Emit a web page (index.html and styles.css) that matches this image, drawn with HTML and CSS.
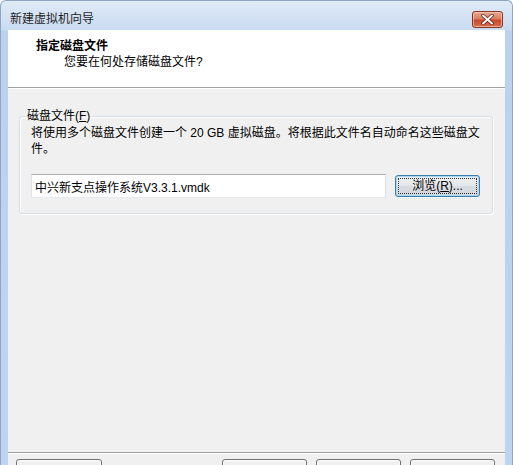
FILE: index.html
```html
<!DOCTYPE html>
<html lang="zh-CN">
<head>
    <meta charset="UTF-8">
    <title>新建虚拟机向导</title>
    <link rel="stylesheet" href="styles.css">
</head>
<body>

<div class="window">

    <!-- Title Bar -->
    <div class="titlebar">
        <span class="title">新建虚拟机向导</span>
        <button class="close" title="关闭">
            <svg width="13" height="11" viewBox="0 0 13 11">
                <path d="M2 1.5 L11 9.5 M11 1.5 L2 9.5" stroke="#5a1a10" stroke-width="3.4" stroke-linecap="round"/>
                <path d="M2 1.5 L11 9.5 M11 1.5 L2 9.5" stroke="#ffffff" stroke-width="2" stroke-linecap="round"/>
            </svg>
        </button>
    </div>

    <div class="client">

        <!-- Header -->
        <div class="header">
            <h1>指定磁盘文件</h1>
            <p>您要在何处存储磁盘文件?</p>
        </div>

        <!-- Content -->
        <div class="content">
            <fieldset class="group">
                <legend>磁盘文件(<u>F</u>)</legend>
                <p class="desc">将使用多个磁盘文件创建一个 20 GB 虚拟磁盘。将根据此文件名自动命名这些磁盘文<br>件。</p>
                <div class="file-row">
                    <input class="file-input" type="text" value="中兴新支点操作系统V3.3.1.vmdk">
                    <button class="btn browse"><span class="focus">浏览(<u>R</u>)...</span></button>
                </div>
            </fieldset>
        </div>

        <div class="footer">
            <button class="btn help" aria-label="帮助"></button>
            <button class="btn" aria-label="上一步"></button>
            <button class="btn" aria-label="下一步"></button>
            <button class="btn" aria-label="取消"></button>
        </div>

    </div>
</div>

</body>
</html>
```

FILE: styles.css
```css
/* General */
* {
    margin: 0;
    padding: 0;
    box-sizing: border-box;
}

body {
    background: #ffffff;
    overflow: hidden;
    font-family: "Liberation Sans", "Noto Sans CJK SC", sans-serif;
    font-size: 12px;
    line-height: 16px;
    color: #000;
}

/* Window frame */
.window {
    width: 513px;
    height: 520px;
    border: 1px solid #8ea6c4;
    border-bottom: none;
    border-radius: 6px 6px 0 0;
    background: linear-gradient(#e0eaf7, #c9dbf1 29px, #bcd2ec 30px, #bfd4ee);
    display: flex;
    flex-direction: column;
}

.titlebar {
    height: 29px;
    display: flex;
    justify-content: space-between;
    align-items: flex-start;
    padding: 10px 9px 0 9px;
}

.title {
    color: #1e1e1e;
}

.close {
    width: 31px;
    height: 17px;
    border: 1px solid #8a3424;
    border-radius: 3px;
    background: linear-gradient(#eaa996, #dc7d62 45%, #c94b2e 55%, #d66d50);
    box-shadow: inset 0 0 0 1px rgba(255, 220, 205, 0.55);
    display: flex;
    align-items: center;
    justify-content: center;
}

/* Client area */
.client {
    margin: 0 7px;
    flex: 1;
    background: #f0f0f0;
    display: flex;
    flex-direction: column;
}

.header {
    height: 58px;
    background: #ffffff;
    border-bottom: 1px solid #a0a0a0;
    padding: 8px 0 0 28px;
}

.header h1 {
    font-size: 12px;
    font-weight: bold;
    line-height: 16px;
}

.header p {
    margin-left: 28px;
}

.content {
    height: 364px;
    border-top: 1px solid #ffffff;
    padding: 19px 12px 0 11px;
}

/* Group box */
.group {
    border: 1px solid #d5dfe5;
    border-radius: 3px;
    box-shadow: inset 1px 1px 0 #ffffff, 1px 1px 0 #ffffff;
    padding: 1px 12px 15px 11px;
}

.group legend {
    margin-left: -5px;
    padding: 0 1px;
}

.desc {
    white-space: nowrap;
}

.file-row {
    display: flex;
    align-items: center;
    gap: 9px;
    margin-top: 17px;
}

.file-input {
    flex: 1;
    height: 24px;
    border: 1px solid #abadb3;
    border-color: #abadb3 #dbdfe6 #e3e9ef #e2e3ea;
    padding: 0 3px;
    font: inherit;
    color: #000;
    background: #fff;
}

/* Buttons */
.btn {
    width: 85px;
    height: 23px;
    border: 1px solid #707070;
    border-radius: 3px;
    background: linear-gradient(#f2f2f2, #ebebeb 50%, #dddddd 50%, #cfcfcf);
    box-shadow: inset 0 0 0 1px rgba(255, 255, 255, 0.8);
    font: inherit;
    color: #000;
}

.browse {
    height: 22px;
    padding: 2px;
    border-color: #3c7fb1;
    background: linear-gradient(#eef1f4, #e4e7ea 50%, #d9dde2 50%, #d2d7dc);
    box-shadow: inset 0 0 0 1px #a9d6f2;
    display: flex;
}

.browse .focus {
    flex: 1;
    border: 1px dotted #333;
    line-height: 14px;
}

.footer {
    border-top: 1px solid #a0a0a0;
    box-shadow: inset 0 1px 0 #ffffff;
    display: flex;
    gap: 9px;
    padding: 6px 10px 0 8px;
}

.footer .help {
    margin-right: auto;
    width: 86px;
}
```
